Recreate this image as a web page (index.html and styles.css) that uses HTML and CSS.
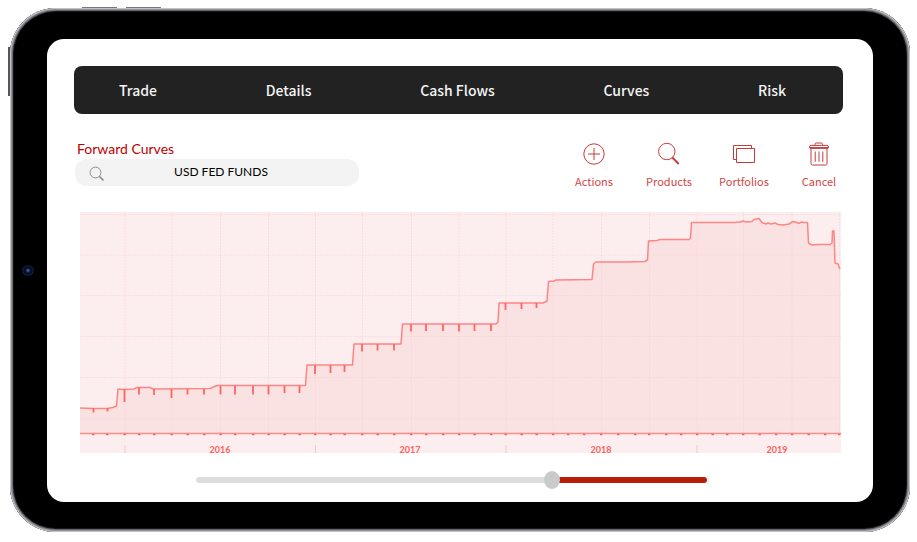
FILE: index.html
```html
<!DOCTYPE html>
<html lang="en">
<head>
<meta charset="utf-8">
<meta name="viewport" content="width=device-width, initial-scale=1">
<title>Forward Curves</title>
<link rel="stylesheet" href="styles.css">
</head>
<body>
<div class="device">
  <span class="key key-up"></span>
  <span class="key key-down"></span>
  <span class="key key-power"></span>
  <span class="camera"></span>
  <main class="screen">
    <nav class="nav">
      <a href="#trade">Trade</a>
      <a href="#details">Details</a>
      <a href="#cash-flows">Cash Flows</a>
      <a href="#curves">Curves</a>
      <a href="#risk">Risk</a>
    </nav>

    <div class="toolbar">
      <div class="field">
        <label for="curve">Forward Curves</label>
        <div class="search">
          <svg width="16" height="16" viewBox="0 0 16 16" fill="none" stroke="#8c8c8c"><circle cx="6.5" cy="6.5" r="5.4"/><path d="M10.4 10.4 14.5 14.5" stroke-width="1.6"/></svg>
          <input id="curve" type="text" value="USD FED FUNDS">
        </div>
      </div>
      <div class="actions">
        <button type="button">
          <svg width="24" height="24" viewBox="0 0 24 24"><circle cx="12" cy="12" r="10.2"/><path d="M12 6v12M6 12h12"/></svg>
          Actions
        </button>
        <button type="button">
          <svg width="24" height="24" viewBox="0 0 24 24"><circle cx="9.8" cy="9.500" r="8.2"/><path d="M15.2 15.4 21.7 22" stroke-width="2"/></svg>
          Products
        </button>
        <button type="button">
          <svg width="24" height="24" viewBox="0 0 24 24"><path d="M4.500 6.500h18v14h-18zM4 17.500H1.500v-14h18V6"/></svg>
          Portfolios
        </button>
        <button type="button">
          <svg width="24" height="24" viewBox="0 0 24 24"><path d="M8 3.500V2.200Q8 1 9.200 1h5.100q1.200 0 1.200 1.200v1.300M2.500 5.800V5q0-1.600 1.600-1.600h15.800q1.600 0 1.600 1.600v.8zM4 6.500v15q0 1.500 1.500 1.500h13q1.500 0 1.500-1.500v-15M8.200 9.500v10.300M12 9.500v10.300M15.800 9.500v10.300"/><path d="M3 6h18" stroke-width="1.7"/></svg>
          Cancel
        </button>
      </div>
    </div>

    <svg class="chart" viewBox="80 212 761 241" role="img" aria-label="USD Fed Funds forward curve, 2016 to 2019">
      <rect class="plot" x="80" y="212" width="761" height="241"/>
      <path class="area" d="M80 408 93 408.5 107 408.5 113 407.5 116.500 406 118 389 123 389.500 134 389 137 387.500 150 387.500 153 389 210 388.500 217 385.500 305.500 385.500 307 365 352.500 365 354 344 401 344 402.500 324 496 324 498 322 499 303 543 303 547 301 548.500 281.500 554 281 556 280 592 279.500 593.500 264 596 262 626 262 645 261.500 647.500 260 648.500 241 657 240.500 660 239.500 689 239.500 690.500 238 691.500 222.500 735 222.500 743 221.500 752 221.500 754 219.500 759 218.500 762 222.500 766 224 775 223.500 783 225 789 224 793 221.500 797 222.500 807.500 222.500 808.500 243 812 245 830 244.500 832 243 832.500 231 834 231 835 263 838 264 840 269V433.500H80Z"/>
      <path class="grid" d="M125 212V434M172 212V434M220.500 212V434M268.500 212V434M315.500 212V434M362.500 212V434M411.500 212V434M459 212V434M506 212V434M553 212V434M601.500 212V434M649.500 212V434M697 212V434M743.500 212V434M792 212V434M839.500 212V434M80 214.500H841M80 255H841M80 295.500H841M80 336.500H841M80 377.500H841M80 419H841"/>
      <path class="line" d="M80 408 93 408.500 107 408.500 113 407.500 116.500 406 118 389 123 389.500 134 389 137 387.500 150 387.500 153 389 210 388.500 217 385.500 305.500 385.500 307 365 352.500 365 354 344 401 344 402.500 324 496 324 498 322 499 303 543 303 547 301 548.500 281.500 554 281 556 280 592 279.500 593.500 264 596 262 626 262 645 261.500 647.500 260 648.500 241 657 240.500 660 239.500 689 239.500 690.500 238 691.500 222.500 735 222.500 740 222 743 221 746 222 752 221.500 754 219.500 759 218.500 762 222.500 766 224 768 223 771 224 775 223 778 224.500 783 225 789 224 793 221.500 797 222.500 799 223.500 801 222 804 222.500 807.500 222.500 808.500 243 812 245 818 244.500 830 244.500 832 243 832.500 231 834 231 835 263 838 264 840 269"/>
      <path class="tick" d="M93.500 408v4.500M107.500 408v3.500M124.500 389v13M139 387.500v7M154 389v6M171.500 389v9M187.500 389v5.500M204 389v5.500M220.500 386v8.500M235 386v8.500M253 386v8.500M268.500 386v8.500M284.500 386v7M299.500 386v7M315 365v9M330.500 365v8M344.500 365v7M362 344v7.500M377.500 344v6.500M394 344v6.500M411 324v7.500M426 324v7M443 324v7M459 324v7.500M474.500 324v7M491 324v7M505.500 303v7M521.500 303v6M536.500 303v5"/>
      <path class="base" d="M80 433.500H841"/>
      <path class="dots" d="M92 434.500h2.400M106 434.500h2.400M123.500 434.500h2.400M138 434.500h2.400M153 434.500h2.400M170.500 434.500h2.400M186.500 434.500h2.400M203 434.500h2.400M219.500 434.500h2.400M234 434.500h2.400M252 434.500h2.400M267.500 434.500h2.400M283.500 434.500h2.400M298.500 434.500h2.400M314 434.500h2.400M329.500 434.500h2.400M343.500 434.500h2.400M361 434.500h2.400M376.500 434.500h2.400M393 434.500h2.400M410 434.500h2.400M425 434.500h2.400M442 434.500h2.400M458 434.500h2.400M473.500 434.500h2.400M490 434.500h2.400M504.500 434.500h2.400M520.500 434.500h2.400M535.500 434.500h2.400M552 434.500h2.400M567 434.500h2.400M583 434.500h2.400M600 434.500h2.400M617 434.500h2.400M634 434.500h2.400M648 434.500h2.400M665 434.500h2.400M680 434.500h2.400M696 434.500h2.400M711.500 434.500h2.400M726 434.500h2.400M742 434.500h2.400M758.500 434.500h2.400M775 434.500h2.400M791 434.500h2.400M807.500 434.500h2.400M824 434.500h2.400M838 434.500h2.400"/>
      <path class="year" d="M125 445v8M315.500 445v8M506 445v8M697 445v8"/>
      <g class="years"><text x="220" y="453">2016</text><text x="410" y="453">2017</text><text x="601" y="453">2018</text><text x="777" y="453">2019</text></g>
    </svg>

    <input class="range" type="range" min="0" max="1000" value="703" aria-label="Date range">
  </main>
</div>
</body>
</html>
```
FILE: styles.css
```css
* { box-sizing: border-box; }

body {
  margin: 0;
  min-height: 100vh;
  display: flex;
  padding: 8px 7px 10px 10px;
  background: #fff;
  font-family: "Noto Sans CJK SC", "Noto Sans", sans-serif;
}

.device {
  position: relative;
  flex: 1;
  display: flex;
  padding: 31px 37px 30px;
  border-radius: 46px;
  background: #000;
  box-shadow: inset 0 0 0 1px #c4c4c8, inset 0 0 0 2px #918e94, inset 0 0 0 3px #69666c, inset 0 0 0 4px #161518;
}

.key { position: absolute; background: #77777c; }
.key-up { top: -1px; left: 72px; width: 35px; height: 1px; }
.key-down { top: -1px; left: 116px; width: 35px; height: 1px; }
.key-power { top: 39px; left: -2px; width: 2px; height: 49px; background: #55555a; }

.camera {
  position: absolute;
  top: 257px;
  left: 12px;
  width: 12px;
  height: 11px;
  border-radius: 50%;
  background: radial-gradient(#44548e 0 1px, #101a38 2px, #050a18 4px, #0a1c40 5px);
}

.screen {
  flex: 1;
  min-width: 0;
  display: flex;
  flex-direction: column;
  padding: 27px 30px 13px 27px;
  border-radius: 17px;
  background: #fff;
}

.nav {
  display: flex;
  align-items: center;
  justify-content: space-between;
  height: 48px;
  padding: 0 57px 1px 45px;
  border-radius: 8px;
  background: #222;
}

.nav a {
  color: #f4f4f4;
  font-size: 14px;
  font-weight: 500;
  line-height: 24px;
  text-decoration: none;
}

.toolbar {
  display: flex;
  justify-content: space-between;
  margin-top: 26px;
}

.field { width: 285px; }

.field label {
  display: block;
  padding-left: 3px;
  color: #c00000;
  font: 14px/18px Lato, sans-serif;
}

.search {
  display: flex;
  align-items: center;
  height: 27px;
  margin: 1px 0 0 1px;
  padding: 0 14px;
  border-radius: 12px;
  background: #f3f3f3;
}

.search svg { flex: none; margin-top: 3px; }

.search input {
  flex: 1;
  min-width: 0;
  padding: 0 8px 2px 0;
  border: 0;
  outline: 0;
  background: none;
  color: #000;
  font: 12px/18px Lato, sans-serif;
  text-align: center;
}

.actions { display: flex; gap: 27px; }

.actions button {
  display: flex;
  flex-direction: column;
  align-items: center;
  gap: 6px;
  width: 48px;
  padding: 2px 0 0;
  border: 0;
  background: none;
  color: #d04646;
  font: 11px/18px "Noto Sans CJK SC", "Noto Sans", sans-serif;
  white-space: nowrap;
}

.actions svg { fill: none; stroke: #c83a3a; stroke-width: 1; }

.chart {
  display: block;
  width: calc(100% - 8px);
  height: auto;
  margin: 22px 2px 0 6px;
  overflow: visible;
}

.plot { fill: #fceeee; }
.area { fill: #fbe2e2; }
.chart path:not(.area) { fill: none; }
.grid { stroke: #f7cfd1; stroke-opacity: .55; stroke-dasharray: 2 1; }
.line { stroke: #ff8484; stroke-width: 1.5; stroke-linejoin: round; }
.tick { stroke: #ff6464; stroke-width: 1.8; }
.base { stroke: #ff8b8b; stroke-width: 1.4; }
.dots { stroke: #ff5c5c; stroke-width: 1.6; }
.year { stroke: #f9c4c4; }
.years { fill: #ff5f5f; font: bold 9px Lato, sans-serif; text-anchor: middle; }

.range {
  appearance: none;
  height: 18px;
  margin: 18px 136px 0 122px;
  background: none;
}

.range::-webkit-slider-runnable-track {
  height: 6px;
  border-radius: 3px;
  background: linear-gradient(to right, #dedede 70%, #ba1c06 70%);
}

.range::-webkit-slider-thumb {
  appearance: none;
  width: 16px;
  height: 18px;
  margin-top: -6px;
  border-radius: 50%;
  background: #cacaca;
}
```
